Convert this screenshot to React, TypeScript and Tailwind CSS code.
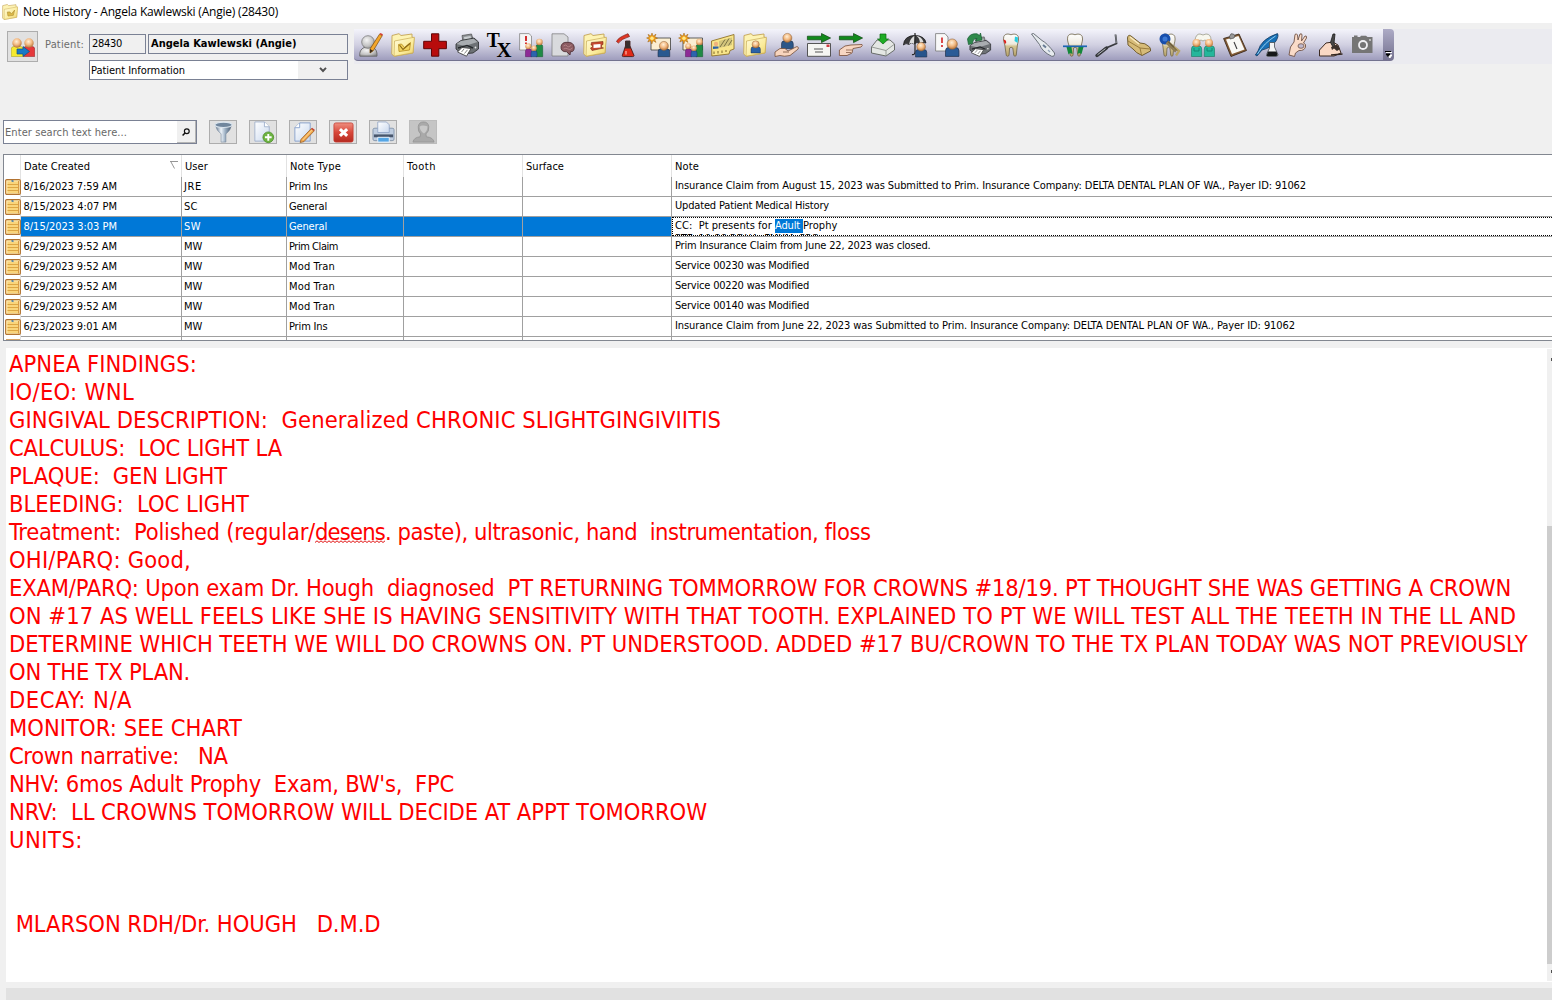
import { useLayoutEffect, useRef, useState } from "react";
import type { ReactNode } from "react";

/* Text run whose letter spacing is computed so that it spans w pixels. */
function T({ w, children, className = "" }: { w: number; children: ReactNode; className?: string }) {
  const ref = useRef<HTMLSpanElement>(null);
  const [ls, setLs] = useState(0);
  useLayoutEffect(() => {
    const el = ref.current;
    if (!el) return;
    el.style.letterSpacing = "0px";
    const n = (el.textContent || "").length;
    const v = (w - el.getBoundingClientRect().width) / n;
    el.style.letterSpacing = v + "px";
    setLs(v);
  }, [w]);
  return (
    <span ref={ref} className={`inline-block whitespace-pre ${className}`} style={{ letterSpacing: ls }}>
      {children}
    </span>
  );
}

function Defs() {
  return (
    <svg className="absolute h-0 w-0" aria-hidden="true">
      <defs>
        <radialGradient id="skin" cx="0.45" cy="0.35" r="0.7">
          <stop offset="0" stopColor="#fff0d8" />
          <stop offset="0.5" stopColor="#f3b981" />
          <stop offset="1" stopColor="#a8662e" />
        </radialGradient>
        <linearGradient id="folder" x1="0" y1="0" x2="1" y2="1">
          <stop offset="0" stopColor="#fffbdc" />
          <stop offset="0.6" stopColor="#fbec9c" />
          <stop offset="1" stopColor="#ecd068" />
        </linearGradient>
        <radialGradient id="gray" cx="0.4" cy="0.35" r="0.75">
          <stop offset="0" stopColor="#f4f4f4" />
          <stop offset="0.6" stopColor="#c4c4c4" />
          <stop offset="1" stopColor="#8b8b8b" />
        </radialGradient>
        <linearGradient id="metal" x1="0" y1="0" x2="1" y2="0">
          <stop offset="0" stopColor="#5d7187" />
          <stop offset="0.35" stopColor="#eef4fa" />
          <stop offset="0.6" stopColor="#9fb2c5" />
          <stop offset="1" stopColor="#43566b" />
        </linearGradient>
        <linearGradient id="red" x1="0" y1="0" x2="0" y2="1">
          <stop offset="0" stopColor="#ef8f80" />
          <stop offset="0.5" stopColor="#d8473a" />
          <stop offset="1" stopColor="#b52a20" />
        </linearGradient>
        <linearGradient id="tooth" x1="0" y1="0" x2="0" y2="1">
          <stop offset="0" stopColor="#fff" />
          <stop offset="0.45" stopColor="#eeeade" />
          <stop offset="0.55" stopColor="#d3c391" />
          <stop offset="1" stopColor="#b7a36c" />
        </linearGradient>
        <linearGradient id="page" x1="0" y1="0" x2="1" y2="1">
          <stop offset="0" stopColor="#ffffff" />
          <stop offset="1" stopColor="#c9d8ee" />
        </linearGradient>
        <pattern id="squiggle" width="4" height="4" patternUnits="userSpaceOnUse">
          <path d="M0 2.500L2 .8L4 2.500" fill="none" stroke="#e01010" strokeWidth="1" />
        </pattern>
      </defs>
    </svg>
  );
}

function Person({ x, y, s = 1, c }: { x: number; y: number; s?: number; c: string }) {
  return (
    <g transform={`translate(${x} ${y}) scale(${s})`}>
      <path d="M0 16V11Q0 8 3 8H9Q12 8 12 11V16Z" fill={c} stroke="#1f2c46" strokeWidth=".6" />
      <circle cx="6" cy="5" r="4.6" fill="url(#skin)" stroke="#8d6138" strokeWidth=".5" />
    </g>
  );
}

const Folder = () => (
  <>
    <path d="M1 2.5L8 .7L10 2.5L21 1V4L23 5L22 20L3 23.3L.8 21Z" fill="#fdf3b4" stroke="#c4a455" strokeWidth=".9" />
    <path d="M3.5 8L23.4 4.2L22 19.8L3 23.2Z" fill="url(#folder)" stroke="#c9ab55" strokeWidth=".7" />
  </>
);

const Printer = () => (
  <>
    <path d="M8 9L7 2.5L16.5 1L18.5 8Z" fill="#8e9296" stroke="#4d4d4d" strokeWidth=".7" />
    <path d="M9.500 8L9 4L15.500 3L16.500 7Z" fill="#c9cdd0" />
    <path d="M1 11L6 7.5L19 5L23.5 9V16L18 20L7 21L1 16Z" fill="#6d7175" stroke="#27292b" strokeWidth=".8" />
    <path d="M1.5 11L6 8L18.5 5.7L22.5 9L10 13Z" fill="#a9adb1" />
    <path d="M3 15L12 12.4L18 15" stroke="#26292c" strokeWidth="1.4" fill="none" />
    <path d="M2.500 19L7 14.500L16 15.500L11.500 23.200Z" fill="#fff" stroke="#333" strokeWidth=".8" />
    <path d="M6.500 19L9 16M9.500 20.500L12.500 16.8" stroke="#777" strokeWidth=".9" />
    <circle cx="20.5" cy="14.5" r=".9" fill="#e8e8e8" />
  </>
);

const SunCard = () => (
  <>
    <path d="M4 5H23.5V17H4Z" fill="#fbeed2" stroke="#3d3d3d" strokeWidth=".8" />
    <path d="M5 0L6 3.2L9 1.2L7.8 4L10.5 5.2L7.6 6.4L9 9.4L6 7.6L4.8 11L3.8 7.6L.8 9L2.2 6.2L-.4 5L2.3 4L1 1.4L3.9 3Z" fill="#f6a51c" stroke="#9a5a08" strokeWidth=".5" />
    <circle cx="5" cy="5.2" r="1.7" fill="#ffe98a" />
  </>
);

const GreenArrow = () => (
  <path d="M.4 3.2H14.5V.5L23.6 5L14.5 9.6V6.8H.4Z" fill="#118a1b" stroke="#0b4310" strokeWidth=".7" />
);

const Three = () => (
  <>
    <path d="M17 23.700V13.500Q17 11.500 19 11.500H22Q23.700 11.500 23.700 13.500V23.700Z" fill="#1f8a45" stroke="#0f5427" strokeWidth=".5" />
    <path d="M6.500 23.700V18Q6.500 16 8.500 16H11Q12.500 16 12.500 18V23.700Z" fill="#8d2a96" stroke="#54165a" strokeWidth=".5" />
    <path d="M12 23.700V20Q12 18 14 18H16.500Q18 18 18 20V23.700Z" fill="#2c63ad" stroke="#173b6d" strokeWidth=".5" />
    <circle cx="20.400" cy="9" r="3.300" fill="url(#skin)" />
    <circle cx="9.300" cy="13.300" r="3" fill="url(#skin)" />
    <circle cx="15" cy="15.300" r="2.800" fill="url(#skin)" />
  </>
);

const ToothShape = () => (
  <path
    d="M4.8 3.5C6 .6 9.5 .6 12 1.8C14.500 .6 18 .8 19.200 3.500C20.200 7 18.800 9.500 18.400 12L17.200 22.500Q16 24 14.800 22.500L13.800 15Q12 13.500 10.600 15L10 22.500Q8.500 24 7.300 22.500L5.800 12C5 9 4 7 4.800 3.500Z"
    fill="url(#tooth)"
    stroke="#6c6246"
    strokeWidth=".8"
  />
);

const icons: ReactNode[] = [
  <>
    <path d="M.8 23.200Q0 17 5 14.500H14Q18.500 16.500 18 23.200Z" fill="url(#gray)" stroke="#5e5e5e" strokeWidth=".8" />
    <circle cx="9" cy="9" r="6.300" fill="url(#gray)" stroke="#6e6e6e" strokeWidth=".7" />
    <path d="M11 16L20.500 1.200L23.300 2.600L14.200 17.800L11 20Z" fill="#f3a62b" stroke="#7d4c0a" strokeWidth=".7" />
    <path d="M20.500 1L21.500 0L23.900 1.300L23.300 2.800Z" fill="#d63b31" />
    <path d="M11 16L14.200 17.800L11 20Z" fill="#3b2c1d" />
  </>,
  <>
    <Folder />
    <path d="M7.500 11.500L10.500 11L13.500 14.500L19.500 9.500L18.500 17L8 18.500Z" fill="#f2d460" stroke="#b58a1e" strokeWidth=".8" />
    <path d="M8.500 12L12 16.500L19 10.500" fill="none" stroke="#8a6714" strokeWidth="1.200" />
  </>,
  <path d="M8.500 .8H15.800V8.300H23.400V15.700H15.800V23.200H8.500V15.700H.7V8.300H8.500Z" fill="#b80c0c" stroke="#5f0606" strokeWidth="1" />,
  <Printer />,
  <>
    <text x="-.3" y="14" fontFamily="Liberation Serif, serif" fontWeight="700" fontSize="21" textLength="13" lengthAdjust="spacingAndGlyphs">T</text>
    <text x="9.500" y="24" fontFamily="Liberation Serif, serif" fontWeight="700" fontSize="21" textLength="15" lengthAdjust="spacingAndGlyphs">X</text>
  </>,
  <>
    <path d="M.6 .6H10L12.500 3V17H.6Z" fill="#f5f5f5" stroke="#777" strokeWidth=".7" />
    <path d="M7 3V8M7 9.500V11" stroke="#d01919" strokeWidth="1.800" />
    <Three />
  </>,
  <>
    <path d="M1 .8H13L17 4V23H1Z" fill="#d9dadd" stroke="#777" strokeWidth=".7" />
    <path d="M10 13.500Q11 9 16 9.300Q22.500 9 23.200 14Q23.500 19 19.500 18.700L19 22L15.800 18.800Q9.500 19 10 13.500Z" fill="#8c5c62" stroke="#4a2930" strokeWidth=".8" />
    <path d="M12.500 13Q15 11 16 13T20.500 12M12.500 16Q15 14.500 17 16T21.500 15" stroke="#b78489" fill="none" strokeWidth=".9" />
  </>,
  <>
    <Folder />
    <path d="M8.500 9.500L20 8.500V11.500L18.500 12V14.500L20.500 15L9 17.500L7.500 15L9.500 14V12.500L8 12Z" fill="#c7492f" stroke="#7b2614" strokeWidth=".6" />
    <path d="M10.500 11.500L17.500 11V14.500L10.500 15Z" fill="#fff" />
  </>,
  <>
    <path d="M10.500 8H15V13L19 22.500Q19 23.600 17.500 23.600H8.500Q7 23.600 7.300 22.500L10.500 13Z" fill="#df2a18" stroke="#38100b" strokeWidth=".8" />
    <path d="M10.500 8H15V13L16 15.500H9.500L10.500 13Z" fill="#39302f" />
    <path d="M1.500 8.500Q3 4.500 13 .7L14.500 3.500Q6 6 3.500 10Z" fill="#e13625" stroke="#7d150c" strokeWidth=".7" />
    <path d="M11 18V21.500" stroke="#ffb0a0" strokeWidth="1.300" />
  </>,
  <>
    <SunCard />
    <Person x={11} y={8} s={0.98} c="#29588f" />
  </>,
  <>
    <SunCard />
    <Three />
  </>,
  <>
    <path d="M.5 8L23 1.500V16L19 17.500L18 21L.8 23Z" fill="#f8e58a" stroke="#91742a" strokeWidth=".9" />
    <path d="M8 8L21 4.500V12L8 15Z" fill="#d3c57c" />
    <path d="M9 14L14 6.500M13 13.500L18 5.500M17.500 12.500L21 7" stroke="#6f6a3e" strokeWidth=".9" />
    <circle cx="5" cy="11" r="2.200" fill="#f0b27b" />
    <path d="M2 16V13.500H7.500V15.500Z" fill="#2d62a5" />
    <path d="M3 21V18.500M7 20.500V18M11 20V17.500M15 19V17" stroke="#7f6727" />
  </>,
  <>
    <Folder />
    <Person x={8} y={7.500} s={0.78} c="#2b62a8" />
  </>,
  <>
    <Person x={6.500} y={0} s={0.98} c="#2c5688" />
    <path d="M0 19L5 15.500H10L13 18L22 13.500Q24 14 23.200 16L15 22.500Q9 24 5 22.500L0 23.500Z" fill="#f8d5be" stroke="#76513b" strokeWidth=".8" />
    <path d="M8 19H14" stroke="#76513b" strokeWidth=".8" />
  </>,
  <>
    <path d="M.5 10.500H23.500V23.300H.5Z" fill="#f5f5f2" stroke="#454545" strokeWidth=".9" />
    <path d="M7 16H16M8 19H16" stroke="#555" strokeWidth="1" />
    <path d="M19.500 11.500H22.500V14H19.500Z" fill="#d23b42" />
    <GreenArrow />
  </>,
  <>
    <path d="M.4 17L6 13L12 12L23 11.500Q24 12.500 22 14L14 15.500L13 20L8 22.500H.4Z" fill="#f7d6c2" stroke="#764b35" strokeWidth=".8" />
    <path d="M7 17L13 17M7 19.500L12 19.500" stroke="#764b35" strokeWidth=".7" />
    <GreenArrow />
  </>,
  <>
    <path d="M.5 14L6 7H19L23.500 11V17L15 23L.5 20Z" fill="#e4e7e4" stroke="#5e625e" strokeWidth=".9" />
    <path d="M.6 14L15 17.500L23.400 11.200M15 17.500V22.800" stroke="#8d928d" strokeWidth=".9" fill="none" />
    <path d="M9 1H15V6H17.500L12 11L6.500 6H9Z" fill="#1eac24" stroke="#0c6711" strokeWidth=".7" />
  </>,
  <>
    <path d="M.4 12Q1 3 12 2.300Q22 3 23 10Q19 8.500 17 11Q14 8 11 11Q8.500 8.500 6 11.500Q3 9.500 .4 12Z" fill="#3a3a3c" stroke="#111" strokeWidth=".7" />
    <path d="M12 2.500Q7 5 6 11.300Q8.500 8.800 11 11ZM13 2.600Q17 5 17 11Q19 8.800 20.500 9Q19 4 13 2.600Z" fill="#dcdcdc" />
    <path d="M12 0V19Q11.500 22.500 9 21.500" stroke="#242424" strokeWidth="1.200" fill="none" />
    <Person x={12.500} y={9} s={0.94} c="#27548c" />
  </>,
  <>
    <path d="M.6 .6H10L13 4V18H.6Z" fill="#f8f8f8" stroke="#777" strokeWidth=".8" />
    <path d="M7 4.500V10M7 12V14" stroke="#d42020" strokeWidth="1.600" />
    <Person x={10.500} y={5.500} s={1.12} c="#2b5b96" />
  </>,
  <>
    <g transform="translate(2 3) scale(.92 .88)"><Printer /></g>
    <path d="M.5 6Q3 0 10 .8L12.500 2.500L13.500 0L15 7L8.500 8L10 5.500Q6 5 5.500 10.500L1.500 11.500Z" fill="#2f8a4c" stroke="#165b30" strokeWidth=".7" />
  </>,
  <>
    <ToothShape />
    <path d="M4.500 6.500Q8 7 7 10.500L5.500 10.500Z" fill="#df211d" />
    <path d="M16 3.500L19 4.500L18.600 10L15.500 8Z" fill="#26cde0" />
  </>,
  <>
    <path d="M.5 1L2.500 .5L11 7.500Q16 10 23.500 20Q24 24 20.500 23.200Q11 18.500 8.500 11.500Z" fill="#e6eaee" stroke="#60666e" strokeWidth=".9" />
    <path d="M12 12L15 14.500" stroke="#697c95" strokeWidth="2" />
    <path d="M17 17L19 19" stroke="#94a5ba" strokeWidth="1.200" />
  </>,
  <>
    <ToothShape />
    <path d="M3.500 14H8.500L9.500 21L7 20L5.500 21.500ZM15.500 14H20.500L18.500 21L16.500 20L14.500 21Z" fill="#14883a" />
    <path d="M0 13.300H24" stroke="#1d66b2" strokeWidth="1.700" />
  </>,
  <>
    <path d="M1.500 22.500L10 15.500L21.500 10.500L20.500 1.500" stroke="#383a3e" strokeWidth="1.800" fill="none" />
    <path d="M2 22.500L11.500 15" stroke="#35373b" strokeWidth="3.400" strokeLinecap="round" />
    <path d="M2.500 21.800L10.500 15.600" stroke="#b4b8bd" strokeWidth="1" />
    <path d="M20.500 1.500L21.500 10" stroke="#b3b7bc" strokeWidth=".6" />
  </>,
  <>
    <path d="M.5 5Q1 1 4 3L13 10Q18 9.500 22.500 14Q24 16 23.500 18L15 22.500Q9 20 6 16L1 12Z" fill="#d6bb78" stroke="#675226" strokeWidth=".9" />
    <path d="M1 8L13 15L23 16M13 15L14.500 22" stroke="#997c3d" strokeWidth="1" fill="none" />
    <path d="M3 4L12 11" stroke="#faeac0" strokeWidth="1.500" />
  </>,
  <>
    <g transform="translate(-1.5 0) scale(.9 1)"><ToothShape /></g>
    <circle cx="6" cy="6" r="4" fill="#3b78d4" stroke="#174eac" strokeWidth="3" />
    <path d="M8 9L17.500 18" stroke="#8d7c55" strokeWidth="4" />
    <path d="M15 14L20 18L17 22.500" stroke="#b9a468" strokeWidth="2.400" fill="none" />
    <path d="M9 8.500L18 17.500" stroke="#4c4026" strokeWidth=".9" />
  </>,
  <>
    <path d="M4 7Q5 .8 9 1L12 2L15 1Q20 1 20 7L18 10Q15 5.500 12 8Q8.500 5.500 6 10Z" fill="#f7f7ee" stroke="#91917b" strokeWidth=".7" />
    <path d="M.5 16Q.5 13 3 13H8Q10.700 13 10.700 16V23.500H.5ZM13.300 16Q13.300 13 16 13H21Q23.500 13 23.500 16V23.500H13.300Z" fill="#24b69b" stroke="#167760" strokeWidth=".6" />
    <circle cx="5.500" cy="10" r="4" fill="url(#skin)" />
    <circle cx="18" cy="10" r="4" fill="url(#skin)" />
    <path d="M3 15V18H8V15M16 15V18H21V15" stroke="#127d69" strokeWidth=".8" fill="none" />
  </>,
  <>
    <path d="M.6 5.500L16 1L23.500 17.500L8 23.500Z" fill="#835b35" stroke="#3c2a1b" strokeWidth=".9" />
    <path d="M3 6.500L15.500 3L21.500 16.500L9 21Z" fill="#f9f9f5" />
    <path d="M6.500 3.500L8 .8L10.500 1L12 3L11 5L7 6Z" fill="#999" stroke="#4c4c4c" strokeWidth=".7" />
    <path d="M11 9L14 16" stroke="#3c3c3c" strokeWidth="1.100" />
  </>,
  <>
    <path d="M3 18Q6 6 22.500 .6Q24 3 21 8Q16 15 7 17L2 23L.4 22Z" fill="#166fb5" stroke="#12385e" strokeWidth=".8" />
    <path d="M2.500 21Q9 10 20.500 3" stroke="#93ceee" strokeWidth="1" fill="none" />
    <path d="M14.500 9.500H19.500V14L23 21.500Q23 23.500 21 23.500H13Q11 23.500 11.500 21.500L14.500 15Z" fill="#f1f3f5" stroke="#454b52" strokeWidth=".8" />
    <path d="M13 18.500H21.500L22.500 21.500Q22.500 23 21 23H13Q11.500 23 12 21.500Z" fill="#16181a" />
  </>,
  <>
    <path d="M2 22L3.500 14L7 9L8 1.500Q9.500 0 10.500 2L11 7L13 1Q15 .2 15 2L14.500 8L18 3Q20 2.500 19.500 5L16.500 10Q19.500 11 18.500 14Q17 18 12 17.500L8.500 20L7.500 23.500Z" fill="#fadbc8" stroke="#705347" strokeWidth=".9" />
    <ellipse cx="14" cy="13" rx="3" ry="2.300" fill="#c0b9cd" stroke="#705347" strokeWidth=".8" />
  </>,
  <>
    <path d="M.5 17L7 10L14 9L19 12L22 20L15 23H.5Z" fill="#fad9c5" stroke="#3c2a22" strokeWidth="1" />
    <path d="M14.500 15L11.500 9.500L14 1L16 1L15 10L17 15" fill="#474747" stroke="#1c1c1c" strokeWidth=".8" />
    <path d="M12 14L18 11.500L21 16L18 18L15 15.500L13 17Z" fill="#3b302a" />
    <path d="M12 22L23.500 21" stroke="#342720" strokeWidth="1.400" />
  </>,
  <>
    <path d="M3 3.500V2.500H6.500V4H9L10 2.800H15L16.500 4H21.500V20H1V4H3Z" fill="#757575" />
    <circle cx="12" cy="12" r="4.900" fill="#f0f0f3" />
    <circle cx="12" cy="12" r="3.100" fill="#757575" />
    <circle cx="19" cy="7" r=".9" fill="#ddd" />
  </>,
];

const NoteIcon = () => (
  <svg viewBox="0 0 16 16" className="h-4 w-4">
    <rect x=".6" y=".6" width="14.800" height="14.800" rx="1.200" fill="#fce7ad" stroke="#b37331" strokeWidth="1.100" />
    <path d="M2.500 2.500H13V14H2.500Z" fill="#fad57b" />
    <path d="M2.500 5.500H13M2.500 8.500H13M2.500 11.500H13" stroke="#dda643" strokeWidth="1" />
    <path d="M13.500 2V14.500" stroke="#d99b43" strokeWidth="1" />
    <path d="M6.500 1.500L8.500 2.500" stroke="#4b7da2" strokeWidth="1.500" />
  </svg>
);

const actionIcons: ReactNode[] = [
  <>
    <path d="M7.500 4Q8.500 10 13.500 13.500V22H18.500V13.500Q23.500 10 24.500 4Z" fill="url(#metal)" stroke="#6f8296" strokeWidth=".6" />
    <ellipse cx="16" cy="4" rx="9" ry="2.800" fill="#70869d" stroke="#dbe5ee" strokeWidth="1.200" />
  </>,
  <>
    <path d="M7 1H17L22 6V21H7Z" fill="url(#page)" stroke="#92a6c5" strokeWidth=".8" />
    <path d="M17 1V6H22" fill="#fff" stroke="#92a6c5" strokeWidth=".8" />
    <circle cx="21" cy="17" r="5.600" fill="#6db441" stroke="#4b8a27" strokeWidth=".8" />
    <path d="M21 13.500V20.500M17.500 17H24.500" stroke="#fff" strokeWidth="2" />
  </>,
  <>
    <path d="M12 2H23V21H7V7Z" fill="url(#page)" stroke="#7f9bc9" strokeWidth=".9" />
    <path d="M12 2V7H7" fill="#fff" stroke="#7f9bc9" strokeWidth=".9" />
    <path d="M13.500 19L24 8L27 10.500L16.500 21.500L12.500 22.500Z" fill="#f0a64a" stroke="#955c25" strokeWidth=".8" />
    <path d="M24 8L25 7L28 9.500L27 10.500Z" fill="#c63f31" />
    <path d="M15 20L25 9.500" stroke="#ffe0a1" strokeWidth="1" />
  </>,
  <>
    <rect x="6" y="2" width="20" height="20" rx="2" fill="url(#red)" stroke="#c53a2f" strokeWidth=".8" />
    <path d="M12.300 8.500L19.800 15.500M19.800 8.500L12.300 15.500" stroke="#fff" strokeWidth="3.200" />
  </>,
  <>
    <path d="M5 9Q5 7.500 7 7.500H25Q27 7.500 27 9V19Q27 20.500 25 20.500H7Q5 20.500 5 19Z" fill="#bfcde0" stroke="#74879f" strokeWidth=".8" />
    <path d="M6 14H26V17H6Z" fill="#48566c" />
    <path d="M10 1H19L22 4V12H10Z" fill="url(#page)" stroke="#8aa0c1" strokeWidth=".8" />
    <path d="M10 17H22V22H10Z" fill="#55a6e5" stroke="#e9f2fb" strokeWidth="1" />
  </>,
  <>
    <path d="M5 22Q6 17 12.500 16.500L13 13.500Q10 11 10.500 6Q11 1 16 1Q21 1 21.500 6Q22 11 18.500 13.500L19 16.500Q26 17 27 22Z" fill="#a9a9a9" stroke="#929292" strokeWidth=".8" />
    <path d="M12 6Q14 3.500 20 5.500Q20.500 10 16.500 13Q12.500 11 12 6Z" fill="#c9c9c9" />
  </>,
];

type Row = { d: string; u: string; uw: number; t: string; tw: number; n: string; nw: number };
const rows: Row[] = [
  { d: "8/16/2023 7:59 AM", u: "JRE", uw: 18, t: "Prim Ins", tw: 38.5, n: "Insurance Claim from August 15, 2023 was Submitted to Prim. Insurance Company: DELTA DENTAL PLAN OF WA., Payer ID: 91062", nw: 631 },
  { d: "8/15/2023 4:07 PM", u: "SC", uw: 13.5, t: "General", tw: 38, n: "Updated Patient Medical History", nw: 154 },
  { d: "8/15/2023 3:03 PM", u: "SW", uw: 17, t: "General", tw: 38, n: "", nw: 0 },
  { d: "6/29/2023 9:52 AM", u: "MW", uw: 18, t: "Prim Claim", tw: 49, n: "Prim Insurance Claim from June 22, 2023 was closed.", nw: 255.5 },
  { d: "6/29/2023 9:52 AM", u: "MW", uw: 18, t: "Mod Tran", tw: 46, n: "Service 00230 was Modified", nw: 134 },
  { d: "6/29/2023 9:52 AM", u: "MW", uw: 18, t: "Mod Tran", tw: 46, n: "Service 00220 was Modified", nw: 134 },
  { d: "6/29/2023 9:52 AM", u: "MW", uw: 18, t: "Mod Tran", tw: 46, n: "Service 00140 was Modified", nw: 134 },
  { d: "6/23/2023 9:01 AM", u: "MW", uw: 18, t: "Prim Ins", tw: 38.5, n: "Insurance Claim from June 22, 2023 was Submitted to Prim. Insurance Company: DELTA DENTAL PLAN OF WA., Payer ID: 91062", nw: 620 },
];

const lines: [string, number][] = [
  ["APNEA FINDINGS:", 188],
  ["IO/EO: WNL", 125],
  ["GINGIVAL DESCRIPTION:  Generalized CHRONIC SLIGHTGINGIVIITIS", 712],
  ["CALCULUS:  LOC LIGHT LA", 273],
  ["PLAQUE:  GEN LIGHT", 218],
  ["BLEEDING:  LOC LIGHT", 240],
  ["", 0],
  ["OHI/PARQ: Good,", 182],
  ["EXAM/PARQ: Upon exam Dr. Hough  diagnosed  PT RETURNING TOMMORROW FOR CROWNS #18/19. PT THOUGHT SHE WAS GETTING A CROWN", 1502],
  ["ON #17 AS WELL FEELS LIKE SHE IS HAVING SENSITIVITY WITH THAT TOOTH. EXPLAINED TO PT WE WILL TEST ALL THE TEETH IN THE LL AND", 1507],
  ["DETERMINE WHICH TEETH WE WILL DO CROWNS ON. PT UNDERSTOOD. ADDED #17 BU/CROWN TO THE TX PLAN TODAY WAS NOT PREVIOUSLY", 1518.5],
  ["ON THE TX PLAN.", 181],
  ["DECAY: N/A", 123],
  ["MONITOR: SEE CHART", 233],
  ["Crown narrative:   NA", 218.5],
  ["NHV: 6mos Adult Prophy  Exam, BW's,  FPC", 445],
  ["NRV:  LL CROWNS TOMORROW WILL DECIDE AT APPT TOMORROW", 698],
  ["UNITS:", 74],
  [" ", 7],
  [" ", 7],
  [" MLARSON RDH/Dr. HOUGH   D.M.D", 371.5],
];

const cols = "grid grid-cols-[17px_161px_105px_117px_119px_149px_1fr]";

export default function App() {
  return (
    <div className="flex h-[1000px] w-[1552px] flex-col overflow-hidden bg-[#f0f0f0] font-['DejaVu_Sans_Condensed','DejaVu_Sans',sans-serif] text-[11px] leading-[14px] text-black">
      <Defs />
      <header className="flex h-[23px] shrink-0 items-center bg-white pl-0.5 font-['Open_Sans','Noto_Sans',sans-serif] text-xs">
        <svg viewBox="0 0 24 24" className="mr-[5px] h-4 w-4">
          <Folder />
          <path d="M8 12L12 12L14 15L19 9L17 17L9 18Z" fill="#dcb947" stroke="#b39338" />
        </svg>
        <T w={255}>Note History - Angela Kawlewski (Angie) (28430)</T>
      </header>

      <section className="flex h-[97px] shrink-0 items-start">
        <button className="ml-[7px] mt-2 flex h-[31px] w-[31px] items-center justify-center border border-[#adadad] bg-[#e1e1e1]">
          <svg viewBox="0 0 24 24" className="h-6 w-6">
            <path d="M.3 21.500V14Q.3 11.500 3 11.500H9.500Q12 11.500 12 14V21.500Z" fill="#f5ea2f" stroke="#a29a18" strokeWidth=".5" />
            <path d="M12.500 21.500V14Q12.500 11.500 15 11.500H21Q23.700 11.500 23.700 14V21.500Z" fill="#e5383b" stroke="#8d1b1e" strokeWidth=".5" />
            <circle cx="6" cy="8" r="4.700" fill="url(#skin)" />
            <circle cx="18" cy="8" r="4.700" fill="url(#skin)" />
            <path d="M6 14H12V11.500L18.500 16.500L12 21.500V19H6Z" fill="#1979c7" stroke="#135088" strokeWidth=".7" />
          </svg>
        </button>
        <div className="ml-[7px] mt-[15px] w-11 text-[#6d6d6d]"><T w={39}>Patient:</T></div>
        <div className="mt-[11px] flex w-[259px] flex-col gap-1.5">
          <div className="flex gap-0.5">
            <div className="flex h-5 w-[57px] items-center border border-[#7a8194] pl-0.5"><T w={30}>28430</T></div>
            <div className="flex h-5 w-[200px] items-center border border-[#7a8194] pl-0.5 font-bold"><T w={145.5}>Angela Kawlewski (Angie)</T></div>
          </div>
          <div className="flex h-5 items-center justify-between border border-[#7a8194] bg-white pl-px pt-px">
            <T w={94}>Patient Information</T>
            <span className="-mt-px flex h-[18px] w-[49px] items-center justify-center bg-[#f0f0f0]">
              <svg viewBox="0 0 8 6" className="h-1.5 w-2"><path d="M1 .8L4 4L7 .8" fill="none" stroke="#505050" strokeWidth="1.900" /></svg>
            </span>
          </div>
        </div>
        <div className="ml-1.5 mt-1.5 flex h-[35px] w-[1198px] items-start bg-[#ebebf0]">
          <div className="flex h-8 w-[1029px] items-center rounded-bl-sm border-b border-[#73738f] bg-linear-to-b from-[#f4f4fb] via-[#d2d1e2] to-[#9f9dbd] pl-[5px]">
            {icons.map((ic, i) => (
              <svg key={i} viewBox="0 0 24 24" className="mr-2 h-6 w-6 shrink-0 overflow-visible">{ic}</svg>
            ))}
          </div>
          <div className="flex h-8 w-[11px] items-end justify-center rounded-r-sm bg-linear-to-b from-[#adabc6] to-[#74718f] pb-[3px]">
            <svg viewBox="0 0 7 7" className="h-[7px] w-[7px]">
              <path d="M1 1.500H7M2.500 4H7L4.800 7Z" fill="#fff" stroke="#fff" />
              <path d="M0 .5H6M1 3H5L3 5.500Z" fill="#000" stroke="#000" />
            </svg>
          </div>
        </div>
      </section>

      <section className="flex h-[34px] shrink-0 items-start pl-[3px]">
        <div className="flex h-6 w-[194px] items-center border border-[#7a8194] bg-white pl-px text-[#686868]">
          <div className="w-[172px] pt-px"><T w={122}>Enter search text here...</T></div>
          <span className="flex h-full flex-1 items-center justify-center border-r border-b border-[#b5b5b5] bg-[#f0f0f0]">
            <svg viewBox="0 0 8 8" className="h-2 w-2"><circle cx="4.800" cy="3.200" r="2.400" fill="none" stroke="#111" strokeWidth="1.200" /><path d="M3 5L.6 7.500" stroke="#111" strokeWidth="1.500" /></svg>
          </span>
        </div>
        <div className="ml-3 flex gap-3">
          {actionIcons.map((ic, i) => (
            <button key={i} className={`flex h-6 w-7 items-center justify-center border ${i === 5 ? "border-[#bcbcbc] bg-[#c5c5c5]" : "border-[#adadad] bg-[#e1e1e1]"}`}>
              <svg viewBox="2 0 28 24" className="h-[23px] w-[27px] shrink-0">{ic}</svg>
            </button>
          ))}
        </div>
      </section>

      <section className="ml-[3px] flex h-[187px] shrink-0 flex-col overflow-hidden border border-r-0 border-[#828790] bg-white">
        <div className={`${cols} h-[22px] shrink-0 items-stretch [&>div]:border-r [&>div]:border-[#e2e2e2] [&>div]:pt-[5px]`}>
          <div />
          <div className="flex items-start justify-between pl-[3px] pr-[3px]">
            <T w={66}>Date Created</T>
            <svg viewBox="0 0 8 8" className="mt-px h-2 w-2"><path d="M0 .5H8M1 1L4.500 7.500" fill="none" stroke="#969696" /></svg>
          </div>
          <div className="pl-[3px]"><T w={23}>User</T></div>
          <div className="pl-[3px]"><T w={51}>Note Type</T></div>
          <div className="pl-[3px]"><T w={29}>Tooth</T></div>
          <div className="pl-[3px]"><T w={38}>Surface</T></div>
          <div className="!border-r-0 pl-[3px]"><T w={24}>Note</T></div>
        </div>
        {rows.map((r, i) => (
          <div key={i} className={`${cols} h-5 shrink-0 [&>div]:border-r [&>div]:border-[#a0a0a0] [&>div+div]:border-b [&>div+div]:pt-[3px] ${i === 2 ? "[&>div+div]:bg-[#0078d7] [&>div+div]:text-white" : ""}`}>
            <div className="flex items-center !border-[#e2e2e2] pl-px"><span className="-mr-1"><NoteIcon /></span></div>
            <div className="pl-[2.500px]"><T w={93.5}>{r.d}</T></div>
            <div className="pl-[2px]"><T w={r.uw}>{r.u}</T></div>
            <div className="pl-[2px]"><T w={r.tw}>{r.t}</T></div>
            <div />
            <div />
            {i === 2 ? (
              <div className="!border-r-0 !bg-white !pt-0 !text-black">
                <div className="h-[19px] overflow-hidden border-y border-l border-dotted border-black pl-[2px]">
                  <div className="flex h-[15px] items-center">
                    <T w={100}>{"CC:  Pt presents for "}</T>
                    <T w={28} className="bg-[#0078d7] text-white">{"Adult "}</T>
                    <T w={34.5}>Prophy</T>
                  </div>
                  <div className="h-1 overflow-hidden leading-[11px]"><T w={143}>RTF  10-28 RDHA  FMXM  PPC</T></div>
                </div>
              </div>
            ) : (
              <div className="!border-r-0 !pt-[2px] pl-[3px]"><T w={r.nw}>{r.n}</T></div>
            )}
          </div>
        ))}
        <div className={`${cols} h-[3px] [&>div]:border-r [&>div]:border-[#a0a0a0]`}>
          <div className="!border-r-[#e2e2e2] pl-0.5 pt-0.5"><div className="h-px w-3.5 bg-[#d6a468]" /></div><div /><div /><div /><div /><div /><div className="!border-r-0" />
        </div>
      </section>

      <section className="ml-1.5 mt-[7px] flex h-[634px] shrink-0 bg-white">
        <div className="w-[1541px] pl-[3px] pt-0.5 text-[23.500px] leading-7 text-[#fe0000]">
          {lines.map(([t, w], i) =>
            i === 6 ? (
              <div key={i} className="flex h-7">
                <T w={306}>{"Treatment:  Polished (regular/"}</T>
                <span className="relative">
                  <T w={70}>desens</T>
                  <svg className="absolute bottom-0.5 left-0 h-1 w-[70px]"><rect width="70" height="4" fill="url(#squiggle)" /></svg>
                </span>
                <T w={485.5}>{". paste), ultrasonic, hand  instrumentation, floss"}</T>
              </div>
            ) : (
              <div key={i} className="h-7"><T w={w}>{t}</T></div>
            )
          )}
        </div>
        <div className="my-px flex w-[5px] flex-col bg-[#f0f0f0]">
          <div className="flex h-[177px] justify-end pt-[9px]"><span className="h-[3px] w-px bg-[#505050]" /></div>
          <div className="h-[438px] bg-[#cdcdcd]" />
          <div className="flex justify-end pt-1.5"><span className="h-[3px] w-px bg-[#505050]" /></div>
        </div>
      </section>
      <footer className="ml-1.5 mt-1.5 h-3 shrink-0 bg-[#e1e1e1]" />
    </div>
  );
}
